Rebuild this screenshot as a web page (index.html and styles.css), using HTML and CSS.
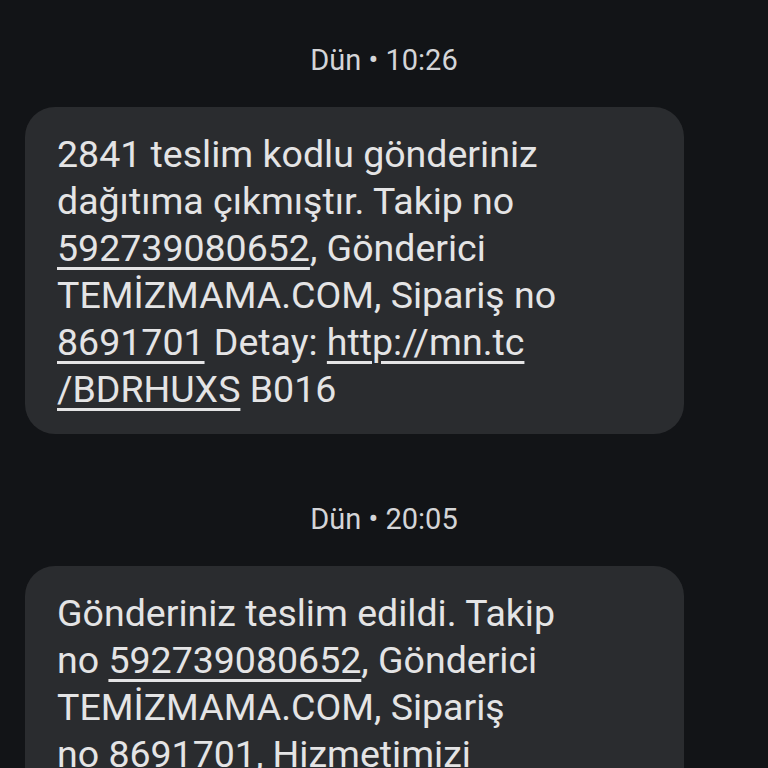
FILE: index.html
```html
<!DOCTYPE html>
<html lang="tr">
<head>
  <meta charset="UTF-8">
  <title>Mesajlar</title>
  <link rel="stylesheet" href="styles.css">
</head>
<body>
<div class="thread">
  <div class="stamp">Dün • 10:26</div>
  <div class="bubble">
    2841 teslim kodlu gönderiniz<br>
    dağıtıma çıkmıştır. Takip no<br>
    <a href="#">592739080652</a>, Gönderici<br>
    TEMİZMAMA.COM, Sipariş no<br>
    <a href="#">8691701</a> Detay: <a href="#">http://mn.tc<br>/BDRHUXS</a> B016
  </div>

  <div class="stamp">Dün • 20:05</div>
  <div class="bubble">
    Gönderiniz teslim edildi. Takip<br>
    no <a href="#">592739080652</a>, Gönderici<br>
    TEMİZMAMA.COM, Sipariş<br>
    no 8691701, Hizmetimizi
  </div>
</div>
</body>
</html>
```

FILE: styles.css
```css
body {
  margin: 0;
  background: #121417;
  font-family: Roboto, "Noto Sans", sans-serif;
  color: #e4e4e5;
  overflow: hidden;
}
.thread {
  display: flex;
  flex-direction: column;
  padding: 46px 0 0 25px;
}
.stamp {
  width: 718px;
  text-align: center;
  font-size: 29px;
  line-height: 28px;
  color: #d4d5d7;
  margin-bottom: 33px;
}
.bubble {
  width: 595px;
  background: #2a2c2f;
  border-radius: 30px;
  padding: 24px 32px 21px;
  font-size: 37.5px;
  line-height: 47px;
  margin-bottom: 71px;
}
.bubble a {
  color: inherit;
  text-decoration: underline;
  text-decoration-thickness: 2.5px;
  text-underline-offset: 6px;
}
```
